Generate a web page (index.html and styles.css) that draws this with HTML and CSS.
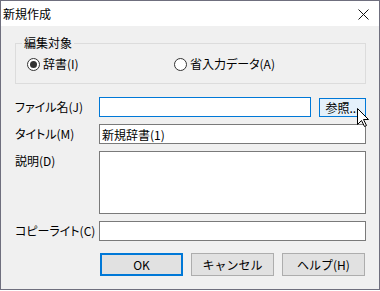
FILE: index.html
```html
<!DOCTYPE html>
<html lang="ja">
<head>
    <meta charset="UTF-8">
    <title>新規作成</title>
    <link rel="stylesheet" href="styles.css">
</head>
<body>
    <div class="window">
        <div class="titlebar">
            <span class="title">新規作成</span>
            <svg class="close" width="11" height="11" viewBox="0 0 11 11">
                <path d="M0.5 0.5 L10.5 10.5 M10.5 0.5 L0.5 10.5" stroke="#111" stroke-width="1" fill="none"/>
            </svg>
        </div>
        <div class="content">
            <fieldset class="group">
                <legend>編集対象</legend>
                <div class="radios">
                    <label class="radio first"><span class="dot checked"></span>辞書(I)</label>
                    <label class="radio"><span class="dot"></span>省入力データ(A)</label>
                </div>
            </fieldset>

            <div class="form">
                <div class="row">
                    <span class="label">ファイル名(J)</span>
                    <div class="field with-btn">
                        <input type="text" class="input focused">
                        <button class="btn browse">参照...</button>
                    </div>
                </div>
                <div class="row">
                    <span class="label">タイトル(M)</span>
                    <div class="field">
                        <input type="text" class="input" value="新規辞書(1)">
                    </div>
                </div>
                <div class="row top">
                    <span class="label">説明(D)</span>
                    <div class="field">
                        <textarea class="input area"></textarea>
                    </div>
                </div>
                <div class="row">
                    <span class="label">コピーライト(C)</span>
                    <div class="field">
                        <input type="text" class="input">
                    </div>
                </div>
                <div class="buttons">
                    <button class="btn default">OK</button>
                    <button class="btn">キャンセル</button>
                    <button class="btn">ヘルプ(H)</button>
                </div>
            </div>
        </div>
        <svg class="cursor" width="13" height="20" viewBox="0 0 13 20">
            <path d="M0.5 0.5 L0.5 16.5 L4.5 12.5 L7.5 18.5 L9.5 17.5 L6.5 11.5 L11.5 11.5 Z" fill="#fff" stroke="#000" stroke-width="1" stroke-linejoin="miter"/>
        </svg>
    </div>
</body>
</html>
```

FILE: styles.css
```css
body {
    margin: 0;
    background: #fff;
    font-family: "Noto Sans CJK JP", "Noto Sans", sans-serif;
    font-size: 12px;
    font-feature-settings: "palt";
    color: #000;
}
.window {
    position: relative;
    width: 380px;
    height: 290px;
    box-sizing: border-box;
    border: 1px solid #6f6f7e;
    background: #f0f0f0;
}
.titlebar {
    height: 25px;
    background: #fff;
    display: flex;
    align-items: center;
    justify-content: space-between;
    padding: 0 10px 0 2px;
}
.title {
    line-height: 16px;
}
.close {
    margin-top: 1px;
}
.content {
    padding: 9px 13px 0 13px;
}
.group {
    margin: 0 0 0 1px;
    padding: 0 0 11px 6px;
    border: 1px solid #dcdcdc;
}
.group legend {
    padding: 0 2px;
    line-height: 16px;
}
.radios {
    display: flex;
    margin-top: 5px;
    padding-left: 5px;
}
.radio {
    display: flex;
    align-items: center;
    line-height: 16px;
}
.radio.first {
    width: 147px;
}
.dot {
    width: 11px;
    height: 11px;
    border: 1px solid #333;
    border-radius: 50%;
    background: #fff;
    margin-right: 3px;
    position: relative;
}
.dot.checked::after {
    content: "";
    position: absolute;
    left: 2px;
    top: 2px;
    width: 7px;
    height: 7px;
    border-radius: 50%;
    background: #333;
}
.form {
    margin-top: 13px;
}
.row {
    display: flex;
    align-items: center;
    margin-bottom: 7px;
}
.row.top {
    align-items: flex-start;
}
.row.top .label {
    padding-top: 2px;
}
.label {
    width: 85px;
    flex-shrink: 0;
    padding-left: 1px;
    box-sizing: border-box;
    line-height: 16px;
    white-space: nowrap;
}
.field {
    flex: 1;
    display: flex;
    align-items: center;
}
.with-btn {
    gap: 8px;
}
.input {
    flex: 1;
    height: 20px;
    box-sizing: border-box;
    border: 1px solid #7a7a7a;
    background: #fff;
    padding: 0 2px;
    margin: 0;
    font-family: inherit;
    font-size: 12px;
    outline: none;
}
.input.focused {
    border-color: #0078d7;
}
.area {
    height: 63px;
    resize: none;
}
.btn {
    font-family: inherit;
    font-size: 12px;
    color: #000;
    background: #e1e1e1;
    border: 1px solid #adadad;
    padding: 0;
    margin: 0;
    box-sizing: border-box;
    width: 83px;
    height: 23px;
}
.btn.browse {
    width: 47px;
    height: 19px;
    background: #e5f1fb;
    border-color: #0078d7;
}
.btn.default {
    border-color: #0078d7;
    box-shadow: inset 0 0 0 1px #0078d7;
}
.buttons {
    display: flex;
    gap: 8px;
    margin-top: 12px;
    padding-left: 86px;
}
.cursor {
    position: absolute;
    left: 356px;
    top: 107px;
}
```
